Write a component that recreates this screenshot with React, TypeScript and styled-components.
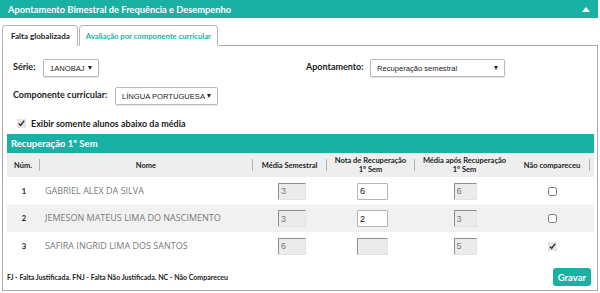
import React from 'react'
import styled, { createGlobalStyle } from 'styled-components'

const teal = '#1ab1a5'
const labelFont = 'Lato, "Open Sans", sans-serif'

const GlobalStyle = createGlobalStyle`
  body {
    margin: 0;
    background: #fff;
    font-family: ${labelFont};
  }
`

const Panel = styled.div`
  width: 598px;
  height: 293px;
  display: flex;
  flex-direction: column;
`

const TitleBar = styled.div`
  height: 18px;
  flex-shrink: 0;
  background: ${teal};
  color: #fff;
  display: flex;
  align-items: center;
  justify-content: space-between;
  padding: 0 8px;
  font: bold 9.3px ${labelFont};
`

const CollapseArrow = styled.span`
  width: 0;
  height: 0;
  border-left: 4px solid transparent;
  border-right: 4px solid transparent;
  border-bottom: 5px solid #fff;
`

const TabStrip = styled.div`
  display: flex;
  margin-top: 7px;
  padding-left: 2px;
  height: 21px;
`

const Tab = styled.div<{ $active?: boolean }>`
  display: flex;
  align-items: center;
  padding: ${(p) => (p.$active ? '0 7px 0 8px' : '0 6px')};
  border: 1px solid #b5b5b5;
  border-bottom: none;
  border-radius: 4px 4px 0 0;
  margin-right: 1px;
  font: bold ${(p) => (p.$active ? 8 : 7.7)}px ${labelFont};
  color: ${(p) => (p.$active ? '#1c1c1c' : teal)};
  white-space: nowrap;
`

const TabFiller = styled.div`
  flex: 1;
  border-bottom: 1px solid #a8a8a8;
`

const Content = styled.div`
  flex: 1;
  margin: 0 0 2px 2px;
  border: 1px solid #aaa;
  border-top: none;
  display: flex;
  flex-direction: column;
`

const Filters = styled.div`
  padding: 13px 0 0 10px;
  display: flex;
  flex-direction: column;
`

const FilterRow = styled.div<{ $mt?: number }>`
  display: flex;
  align-items: center;
  height: 18px;
  margin-top: ${(p) => p.$mt ?? 0}px;
`

const Field = styled.div<{ $w?: number }>`
  display: flex;
  align-items: center;
  width: ${(p) => (p.$w ? `${p.$w}px` : 'auto')};
`

const Label = styled.span<{ $w: number }>`
  width: ${(p) => p.$w}px;
  font: bold 9px ${labelFont};
  color: #1c1c1c;
  padding-bottom: 3px;
  white-space: nowrap;
`

const SelectBox = styled.div<{ $w: number }>`
  width: ${(p) => p.$w}px;
  height: 18px;
  box-sizing: border-box;
  display: flex;
  align-items: center;
  justify-content: space-between;
  padding: 0 6px 0 6px;
  border: 1px solid #b9b9b9;
  border-radius: 2px;
  box-shadow: 0 1px 1px rgba(0, 0, 0, 0.12);
  font: 7.6px "Liberation Sans", Arial, sans-serif;
  color: #222;
  background: #fff;
  white-space: nowrap;
`

const Caret = styled.span`
  width: 0;
  height: 0;
  border-left: 2.5px solid transparent;
  border-right: 2.5px solid transparent;
  border-top: 4px solid #222;
`

const CheckRow = styled.label`
  display: flex;
  align-items: center;
  gap: 5px;
  margin: 13px 0 0 4px;
  font: bold 9px ${labelFont};
  color: #1c1c1c;
`

const Check = styled.input`
  width: 9px;
  height: 9px;
  margin: 0;
  accent-color: #e6e6e6;
`

const Section = styled.div`
  margin: 5px 3px 0 4px;
`

const SectionBar = styled.div`
  height: 19px;
  background: ${teal};
  color: #fff;
  display: flex;
  align-items: center;
  padding-left: 4px;
  font: bold 9.5px ${labelFont};
`

const cols = '33px 213px 74px 88px 100px 75px 1fr'

const HeadRow = styled.div`
  display: grid;
  grid-template-columns: ${cols};
  height: 24px;
  background: #eeeeee;
`

const HeadCell = styled.div`
  display: flex;
  align-items: center;
  font: bold 7.5px ${labelFont};
  color: #1c1c1c;
  line-height: 9px;
`

const HeadText = styled.span`
  flex: 1;
  text-align: center;
  padding: 0 4px;
`

const Sep = styled.span<{ $hidden?: boolean }>`
  width: 1px;
  height: 12px;
  background: ${(p) => (p.$hidden ? 'transparent' : '#b3b3b3')};
`

const Row = styled.div<{ $alt?: boolean; $h: number }>`
  display: grid;
  grid-template-columns: ${cols};
  height: ${(p) => p.$h}px;
  align-items: center;
  background: ${(p) => (p.$alt ? '#f1f1f1' : '#fff')};
`

const Num = styled.div`
  text-align: center;
  font: bold 7.5px ${labelFont};
  color: #1c1c1c;
  padding-left: 1px;
`

const Name = styled.div`
  padding-left: 5px;
  font: 9px "Open Sans", sans-serif;
  color: #7a7a7a;
  padding-bottom: 2px;
`

const CellCenter = styled.div<{ $shift?: number }>`
  display: flex;
  justify-content: center;
  padding-left: ${(p) => p.$shift ?? 0}px;
`

const NoteInput = styled.input<{ $w: number }>`
  width: ${(p) => p.$w}px;
  height: 17px;
  box-sizing: border-box;
  padding: 0 2px;
  margin: 0;
  font: 9px "Liberation Sans", Arial, sans-serif;
  color: #111;
  background: #fff;
  border: 1px solid #b5b5b5;
  border-radius: 1px;
  outline: none;

  &:disabled {
    color: #777;
    background: #ebebeb;
    border-color: #8e8e8e #e2e2e2 #e2e2e2 #8e8e8e;
  }
`

const MissCheck = styled.input`
  width: 9px;
  height: 9px;
  margin: 0;
  accent-color: #e6e6e6;
`

const Footer = styled.div`
  display: flex;
  align-items: center;
  justify-content: space-between;
  padding: 8px 6px 0 4px;
`

const Legend = styled.span`
  font: bold 7px ${labelFont};
  color: #1c1c1c;
`

const SaveButton = styled.button`
  height: 18px;
  padding: 0 5px;
  border: none;
  border-radius: 3px;
  background: ${teal};
  color: #fff;
  font: bold 9.5px ${labelFont};
  cursor: pointer;
`

const students = [
  { n: 1, name: 'GABRIEL ALEX DA SILVA', media: '3', nota: '6', final: '6', miss: false },
  { n: 2, name: 'JEMESON MATEUS LIMA DO NASCIMENTO', media: '3', nota: '2', final: '3', miss: false },
  { n: 3, name: 'SAFIRA INGRID LIMA DOS SANTOS', media: '6', nota: '', final: '5', miss: true },
]

const heights = [28, 27, 28]

export default function App() {
  return (
    <Panel>
      <GlobalStyle />
      <TitleBar>
        Apontamento Bimestral de Frequência e Desempenho
        <CollapseArrow />
      </TitleBar>

      <TabStrip>
        <Tab $active>Falta globalizada</Tab>
        <Tab>Avaliação por componente curricular</Tab>
        <TabFiller />
      </TabStrip>

      <Content>
        <Filters>
          <FilterRow>
            <Field $w={293}>
              <Label $w={30}>Série:</Label>
              <SelectBox $w={56}>
                1ANOBAJ
                <Caret />
              </SelectBox>
            </Field>
            <Field>
              <Label $w={64}>Apontamento:</Label>
              <SelectBox $w={135}>
                Recuperação semestral
                <Caret />
              </SelectBox>
            </Field>
          </FilterRow>
          <FilterRow $mt={10}>
            <Field>
              <Label $w={102}>Componente curricular:</Label>
              <SelectBox $w={103}>
                LÍNGUA PORTUGUESA
                <Caret />
              </SelectBox>
            </Field>
          </FilterRow>
          <CheckRow>
            <Check type="checkbox" defaultChecked />
            Exibir somente alunos abaixo da média
          </CheckRow>
        </Filters>

        <Section>
          <SectionBar>Recuperação 1º Sem</SectionBar>
          <HeadRow>
            <HeadCell>
              <HeadText>Núm.</HeadText>
              <Sep />
            </HeadCell>
            <HeadCell>
              <HeadText>Nome</HeadText>
              <Sep />
            </HeadCell>
            <HeadCell>
              <HeadText>Média Semestral</HeadText>
              <Sep />
            </HeadCell>
            <HeadCell>
              <HeadText>Nota de Recuperação 1º Sem</HeadText>
              <Sep />
            </HeadCell>
            <HeadCell>
              <HeadText>Média após Recuperação 1º Sem</HeadText>
              <Sep $hidden />
            </HeadCell>
            <HeadCell>
              <HeadText>Não compareceu</HeadText>
              <Sep />
            </HeadCell>
            <HeadCell />
          </HeadRow>

          {students.map((s, i) => (
            <Row key={s.n} $alt={i % 2 === 1} $h={heights[i]}>
              <Num>{s.n}</Num>
              <Name>{s.name}</Name>
              <CellCenter $shift={4}>
                <NoteInput $w={28} defaultValue={s.media} disabled />
              </CellCenter>
              <CellCenter $shift={3}>
                <NoteInput $w={31} defaultValue={s.nota} disabled={s.nota === ''} />
              </CellCenter>
              <CellCenter>
                <NoteInput $w={23} defaultValue={s.final} disabled />
              </CellCenter>
              <CellCenter>
                <MissCheck type="checkbox" defaultChecked={s.miss} />
              </CellCenter>
              <div />
            </Row>
          ))}
        </Section>

        <Footer>
          <Legend>FJ - Falta Justificada. FNJ - Falta Não Justificada. NC - Não Compareceu</Legend>
          <SaveButton>Gravar</SaveButton>
        </Footer>
      </Content>
    </Panel>
  )
}
